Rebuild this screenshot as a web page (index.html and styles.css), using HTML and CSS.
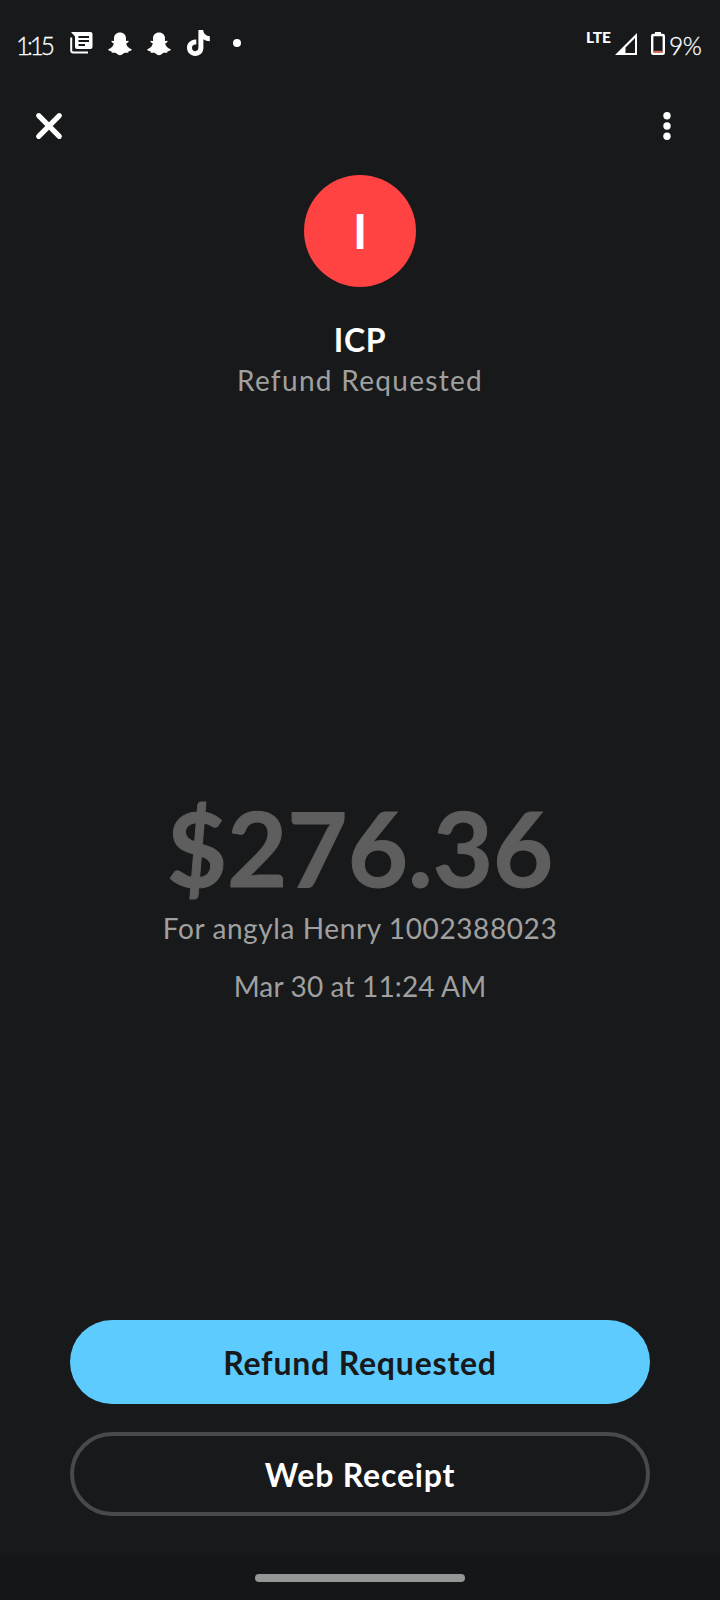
FILE: index.html
```
<!DOCTYPE html>
<html lang="en">
<head>
    <meta charset="UTF-8">
    <meta name="viewport" content="width=device-width, initial-scale=1.0">
    <title>Payment Details</title>
    <link rel="stylesheet" href="styles.css">
</head>
<body>

<div class="screen">
    <div class="status-bar">
        <span class="time">1:15</span>
        <svg class="news-icon" width="23" height="22" viewBox="0 0 23 22">
            <path fill="#fff" d="M1 0H20.500a2 2 0 0 1 2 2V15a2 2 0 0 1-2 2H7a2 2 0 0 1-2-2V4.500Z"/>
            <path fill="none" stroke="#17191a" stroke-width="1.800" d="M8.500 5H19M8.500 9H19M8.500 13H15"/>
            <path fill="none" stroke="#fff" stroke-width="2" d="M1.200 5.500V18.500a2 2 0 0 0 2 2H18"/>
        </svg>
        <svg class="snap-icon" width="24" height="24" viewBox="0 0 24 24">
            <path fill="#fff" d="M12 .5C8.300 .5 6 3 6 6.500V9C5.300 9.200 4.300 8.400 3.500 9C2.900 9.900 4.600 10.900 5.700 11.300C5.700 13.800 3.400 16.300 .3 17.200C-.2 18.500 2 18.900 3.300 19.200C3.700 20 3.500 20.800 4.300 20.800C5.400 20.800 6.600 20.300 7.900 21C9.300 22 10.300 23.300 12 23.300S14.700 22 16.100 21C17.400 20.300 18.600 20.800 19.700 20.800C20.500 20.800 20.300 20 20.700 19.200C22 18.900 24.200 18.500 23.700 17.200C20.600 16.300 18.300 13.800 18.300 11.300C19.400 10.900 21.100 9.900 20.500 9C19.700 8.400 18.700 9.200 18 9V6.500C18 3 15.700 .5 12 .5Z"/>
        </svg>
        <svg class="snap-icon" width="24" height="24" viewBox="0 0 24 24">
            <path fill="#fff" d="M12 .5C8.300 .5 6 3 6 6.500V9C5.300 9.200 4.300 8.400 3.500 9C2.900 9.900 4.600 10.900 5.700 11.300C5.700 13.800 3.400 16.300 .3 17.200C-.2 18.500 2 18.900 3.300 19.200C3.700 20 3.500 20.800 4.300 20.800C5.400 20.800 6.600 20.300 7.900 21C9.300 22 10.300 23.300 12 23.300S14.700 22 16.100 21C17.400 20.300 18.600 20.800 19.700 20.800C20.500 20.800 20.300 20 20.700 19.200C22 18.900 24.200 18.500 23.700 17.200C20.600 16.300 18.300 13.800 18.300 11.300C19.400 10.900 21.100 9.900 20.500 9C19.700 8.400 18.700 9.200 18 9V6.500C18 3 15.700 .5 12 .5Z"/>
        </svg>
        <svg class="tiktok-icon" width="23" height="26" viewBox="0 0 23 26">
            <path fill="#fff" d="M11.400 0H16.200C16.400 3.400 19 6 22.800 6.300V11.200C20.300 11.200 18.200 10.400 16.400 9.200V17.800C16.400 22.600 13 26 8.300 26S0 22.500 0 17.800C0 13 4 9.200 9.300 9.600V14.600C6.700 14.100 5 15.600 5 17.800C5 19.800 6.400 21.200 8.200 21.200S11.400 19.800 11.400 17.600Z"/>
        </svg>
        <span class="more-dot"></span>
        <span class="lte">LTE</span>
        <svg class="signal-icon" width="22" height="22" viewBox="0 0 22 22">
            <path fill="#fff" fill-rule="evenodd" d="M22 0V22H0ZM20 5L10.500 14.500V20H20Z"/>
        </svg>
        <svg class="battery-icon" width="14" height="23" viewBox="0 0 14 23">
            <path fill="#fff" d="M4 0H10V2H4Z"/>
            <rect x="1.200" y="3" width="11.600" height="18.800" rx="1" fill="none" stroke="#fff" stroke-width="2.400"/>
            <path fill="#e0674a" d="M2.400 18.800H11.600V20.600H2.400Z"/>
        </svg>
        <span class="percent">9%</span>
    </div>

    <div class="toolbar">
        <svg width="26" height="26" viewBox="0 0 26 26">
            <path fill="none" stroke="#fff" stroke-width="5.200" stroke-linecap="round" d="M2.700 2.700L23.300 23.300M23.300 2.700L2.700 23.300"/>
        </svg>
        <svg width="8" height="28" viewBox="0 0 8 28">
            <circle cx="4" cy="2.700" r="3.700" fill="#fff"/>
            <circle cx="4" cy="13" r="3.700" fill="#fff"/>
            <circle cx="4" cy="23.300" r="3.700" fill="#fff"/>
        </svg>
    </div>

    <div class="profile">
        <div class="avatar">I</div>
        <h1 class="name">ICP</h1>
        <p class="status">Refund Requested</p>
    </div>

    <div class="payment">
        <div class="amount">$276.36</div>
        <p class="note">For angyla Henry 1002388023</p>
        <p class="date">Mar 30 at 11:24 AM</p>
    </div>

    <div class="actions">
        <button class="btn btn-primary">Refund Requested</button>
        <button class="btn btn-outline">Web Receipt</button>
    </div>

    <div class="nav-bar">
        <div class="nav-handle"></div>
    </div>
</div>

</body>
</html>
```
FILE: styles.css
```
* {
    box-sizing: border-box;
}
body {
    margin: 0;
    background-color: #17191a;
    color: #fff;
    font-family: Lato, "Liberation Sans", sans-serif;
}
h1, p {
    margin: 0;
}
svg {
    display: block;
    flex: none;
    overflow: visible;
}
.screen {
    width: 720px;
    height: 1600px;
    display: flex;
    flex-direction: column;
}
.status-bar {
    height: 88px;
    padding: 30px 18px 0 16px;
    display: flex;
    align-items: flex-start;
}
.time, .percent {
    font-size: 24.5px;
    font-weight: 300;
    line-height: 32px;
    white-space: nowrap;
    -webkit-text-stroke: 0.3px #fff;
}
.time {
    width: 54px;
    letter-spacing: -3.2px;
}
.news-icon {
    margin: 2px 15px 0 0;
}
.snap-icon {
    margin: 2px 15px 0 0;
}
.tiktok-icon {
    margin: 0 23px 0 1px;
}
.more-dot {
    width: 8px;
    height: 8px;
    margin-top: 9px;
    border-radius: 50%;
    background-color: #fff;
}
.lte {
    margin-left: auto;
    font-size: 15.5px;
    font-weight: 900;
    line-height: 15px;
}
.signal-icon {
    margin: 3px 14px 0 4px;
}
.battery-icon {
    margin: 2px 4px 0 0;
}
.percent {
    width: 33px;
    letter-spacing: -0.5px;
}
.toolbar {
    height: 87px;
    padding: 25px 49px 0 36px;
    display: flex;
    justify-content: space-between;
    align-items: flex-start;
}
.profile {
    text-align: center;
}
.avatar {
    width: 112px;
    height: 112px;
    margin: 0 auto;
    border-radius: 50%;
    background-color: #ff4242;
    font-size: 48px;
    font-weight: bold;
    line-height: 112px;
}
.name {
    margin-top: 33px;
    font-size: 32px;
    font-weight: bold;
    line-height: 40px;
    letter-spacing: 0.6px;
}
.status, .note, .date {
    font-size: 28px;
    line-height: 40px;
    color: #a0a0a0;
}
.status {
    letter-spacing: 1.3px;
}
.payment {
    margin-top: 387px;
    text-align: center;
}
.amount {
    font-size: 104px;
    font-weight: bold;
    line-height: 120px;
    color: #5e5e5e;
    -webkit-text-stroke: 1px #5e5e5e;
}
.note {
    margin-top: 1px;
    letter-spacing: 0.6px;
}
.date {
    margin-top: 18px;
    letter-spacing: 0.15px;
}
.actions {
    margin-top: auto;
    padding: 0 70px 39px;
    display: flex;
    flex-direction: column;
    gap: 28px;
}
.btn {
    height: 84px;
    padding: 0;
    border: none;
    border-radius: 42px;
    font-family: inherit;
    font-size: 32px;
    font-weight: bold;
    letter-spacing: 0.8px;
}
.btn-primary {
    background-color: #5ecbfe;
    color: #17191a;
}
.btn-outline {
    border: 4px solid #48494a;
    background-color: transparent;
    color: #fff;
}
.nav-bar {
    height: 45px;
    padding-top: 19px;
    background-color: #151617;
}
.nav-handle {
    width: 210px;
    height: 8px;
    margin: 0 auto;
    border-radius: 4px;
    background-color: #959796;
}
```
